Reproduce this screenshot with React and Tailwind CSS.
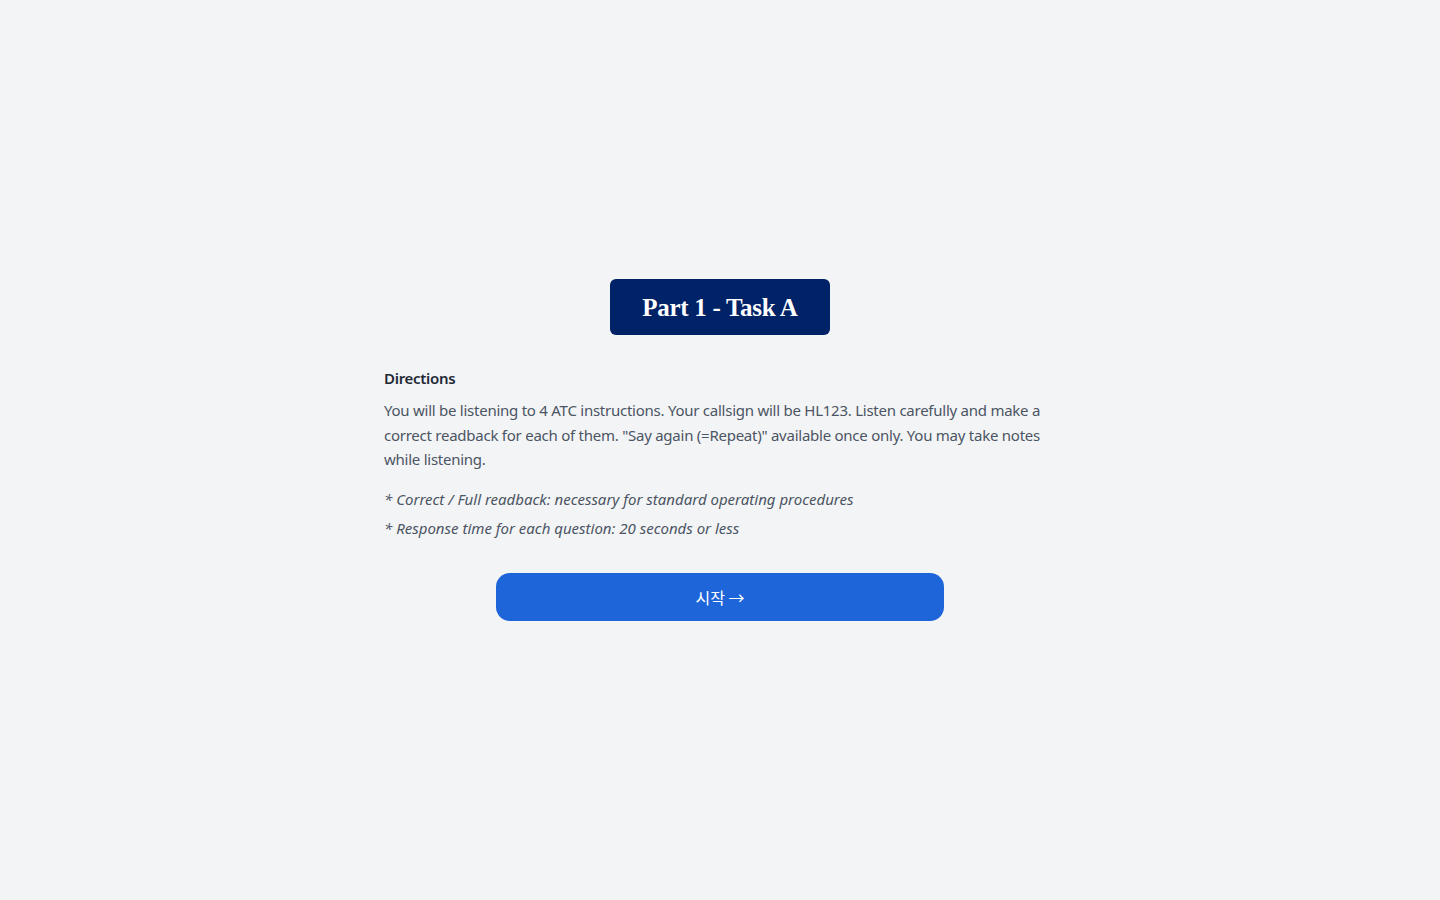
export default function App() {
  return (
    <div className="min-h-screen bg-[#f3f4f6] flex items-center justify-center px-6">
      <div className="w-full max-w-[672px] flex flex-col items-center font-['Noto_Sans','Noto_Sans_CJK_KR',sans-serif]">
        <div className="bg-[#002266] rounded-md px-[32px] h-[56px] flex items-center mb-8">
          <h1 className="text-white text-[25px] font-bold font-['Liberation_Serif',serif] tracking-[-0.3px]">Part 1 - Task A</h1>
        </div>

        <div className="w-full">
          <h2 className="text-[15px] leading-[22px] font-semibold text-[#1f2937] mb-[9px] tracking-[-0.3px]">Directions</h2>
          <p className="text-[15px] leading-[24.5px] text-[#4b5563] tracking-[-0.25px]">
            You will be listening to 4 ATC instructions. Your callsign will be HL123. Listen carefully and make a correct readback for each of them. "Say again (=Repeat)" available once only. You may take notes while listening.
          </p>
          <div className="mt-[15px] space-y-[5px] text-[15px] leading-[24px] italic text-[#4b5563]">
            <p>* Correct / Full readback: necessary for standard operating procedures</p>
            <p>* Response time for each question: 20 seconds or less</p>
          </div>
        </div>

        <button className="mt-[33px] w-full max-w-[448px] h-12 rounded-[14px] bg-[#1d65d8] text-white text-[16px] font-['Noto_Sans_CJK_KR',sans-serif]">
          시작 →
        </button>
      </div>
    </div>
  );
}
